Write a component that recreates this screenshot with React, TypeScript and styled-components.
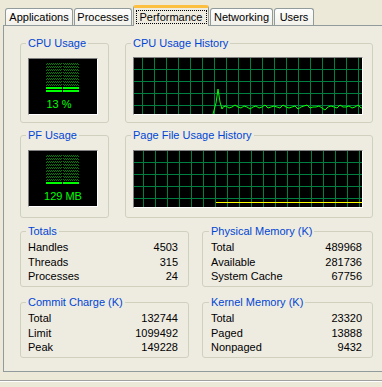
import React from 'react';
import styled, { createGlobalStyle } from 'styled-components';

const GlobalStyle = createGlobalStyle`
  html, body {
    margin: 0;
    padding: 0;
    background: #ece9d8;
  }
  body {
    width: 382px;
    height: 387px;
    overflow: hidden;
    font-family: 'Liberation Sans', Arial, sans-serif;
    font-size: 11px;
    color: #000;
  }
`;

const Window = styled.div`
  width: 382px;
  height: 387px;
  padding-top: 5px;
  box-sizing: border-box;
  overflow: hidden;
  display: flex;
  flex-direction: column;
`;

const TabStrip = styled.div`
  display: flex;
  align-items: flex-end;
  gap: 1px;
  height: 21px;
  padding-left: 5px;
  margin-bottom: -1px;
  position: relative;
  z-index: 1;
`;

const Tab = styled.div<{ $width: number; $active?: boolean }>`
  box-sizing: border-box;
  flex: none;
  width: ${(p) => p.$width}px;
  height: ${(p) => (p.$active ? 21 : 17)}px;
  margin-bottom: ${(p) => (p.$active ? 0 : 1)}px;
  display: flex;
  justify-content: center;
  align-items: flex-start;
  padding-top: 2px;
  line-height: 13px;
  border: 1px solid #919b9c;
  border-bottom: none;
  border-top: ${(p) => (p.$active ? '3px solid #fdbf3f' : '1px solid #919b9c')};
  border-radius: 3px 3px 0 0;
  background: ${(p) => (p.$active ? '#eeebe0' : 'linear-gradient(#fefefe, #f1f0e9)')};
`;

const FocusRing = styled.span`
  box-sizing: border-box;
  width: 71px;
  height: 14px;
  border: 1px dotted #000;
  display: flex;
  justify-content: center;
  align-items: center;
  line-height: 12px;
`;

const Panel = styled.div`
  box-sizing: border-box;
  flex: none;
  margin-left: 3px;
  width: 400px;
  height: 347px;
  border: 1px solid #919b9c;
  background: #eeebe0;
  padding: 11px 0 0 16px;
`;

const Row = styled.div<{ $gap: number; $top?: number }>`
  display: flex;
  gap: ${(p) => p.$gap}px;
  margin-top: ${(p) => p.$top ?? 0}px;
`;

const Group = styled.fieldset<{ $width: number; $height: number; $padLeft?: number }>`
  box-sizing: border-box;
  margin: 0;
  min-width: 0;
  width: ${(p) => p.$width}px;
  height: ${(p) => p.$height}px;
  padding: 0 10px 0 ${(p) => p.$padLeft ?? 7}px;
  border: 1px solid #d0d0bf;
  border-radius: 3px;
`;

const Legend = styled.legend`
  padding: 0 2px;
  margin-left: -2px;
  color: #0046d5;
  line-height: 13px;
`;

const Meter = styled.div`
  box-sizing: border-box;
  margin-top: 8px;
  width: 70px;
  height: 57px;
  background: #000;
  border: 1px solid;
  border-color: #808080 #fff #fff #808080;
  display: flex;
  flex-direction: column;
  align-items: center;

  svg {
    display: block;
  }
`;

const MeterText = styled.div<{ $shift?: number }>`
  margin-top: 3px;
  margin-right: ${(p) => p.$shift ?? 0}px;
  color: #00ff00;
  line-height: 12px;
  white-space: pre;
`;

const Graph = styled.div<{ $top: number }>`
  box-sizing: border-box;
  margin-top: ${(p) => p.$top}px;
  width: 230px;
  height: 58px;
  background: #000;
  border: 1px solid;
  border-color: #808080 #fff #fff #808080;

  svg {
    display: block;
  }
`;

const StatList = styled.div`
  padding-top: 2px;
`;

const StatRow = styled.div`
  display: flex;
  justify-content: space-between;
  line-height: 14.5px;
`;

const StatusBar = styled.div`
  margin-top: 8px;
  flex: 1;
  border-top: 1px solid #a0a0a0;
  box-shadow: inset 0 1px 0 #fff;
`;

// dim segments are a checker of dark green pixels, lit ones solid green
function MeterBars({ rows, lit }: { rows: number; lit: number }) {
  const pixels = [];
  for (let i = 0; i < rows; i++) {
    const y = 4 + i * 3;
    const on = i >= rows - lit;
    for (const x0 of [17, 34]) {
      if (on) {
        pixels.push(<rect key={`${i}-${x0}`} x={x0} y={y} width={16} height={2} fill="#00ff00" />);
        continue;
      }
      for (let dy = 0; dy < 2; dy++) {
        for (let dx = (dy + x0) % 2; dx < 16; dx += 2) {
          pixels.push(
            <rect key={`${i}-${x0}-${dx}-${dy}`} x={x0 + dx} y={y + dy} width={1} height={1} fill="#008000" />,
          );
        }
      }
    }
  }
  return (
    <svg width={68} height={36} shapeRendering="crispEdges">
      {pixels}
    </svg>
  );
}

function GridGraph({ offset, top, children }: { offset: number; top: number; children?: React.ReactNode }) {
  const lines = [];
  for (let x = offset; x < 228; x += 12) {
    lines.push(<line key={`v${x}`} x1={x + 0.5} y1={0} x2={x + 0.5} y2={56} />);
  }
  for (const y of [11, 23, 35, 47]) {
    lines.push(<line key={`h${y}`} x1={0} y1={y + 0.5} x2={228} y2={y + 0.5} />);
  }
  return (
    <Graph $top={top}>
      <svg width={228} height={56}>
        <g stroke="#008040" strokeWidth={1} shapeRendering="crispEdges">
          {lines}
        </g>
        {children}
      </svg>
    </Graph>
  );
}

const cpuNoise = [
  0, -1, 1, 0, -2, 0, 1, -1, 0, 2, 0, -1, 1, 0, -2, 1, 0, -1, 0, 1, -2, 0, 1, 0, -1, 2, 0, -1, -2,
  1, 0, 0, -1, 1, 3, 0, -1, 0, 1, -2, 0, 0, -1, 1, 0, -2, 1, 0,
];

const cpuPoints =
  '79,56 82,45 84,31 86,44 88,51 ' +
  cpuNoise.map((n, i) => `${89 + i * 3},${49 + n}`).join(' ');

const tabs = [
  { label: 'Applications', width: 68 },
  { label: 'Processes', width: 58 },
  { label: 'Performance', width: 76, active: true },
  { label: 'Networking', width: 63 },
  { label: 'Users', width: 40 },
];

const totals = [
  ['Handles', '4503'],
  ['Threads', '315'],
  ['Processes', '24'],
];
const physical = [
  ['Total', '489968'],
  ['Available', '281736'],
  ['System Cache', '67756'],
];
const commit = [
  ['Total', '132744'],
  ['Limit', '1099492'],
  ['Peak', '149228'],
];
const kernel = [
  ['Total', '23320'],
  ['Paged', '13888'],
  ['Nonpaged', '9432'],
];

function Stats({ rows }: { rows: string[][] }) {
  return (
    <StatList>
      {rows.map(([label, value]) => (
        <StatRow key={label}>
          <span>{label}</span>
          <span>{value}</span>
        </StatRow>
      ))}
    </StatList>
  );
}

export default function App() {
  return (
    <>
      <GlobalStyle />
      <Window>
        <TabStrip>
          {tabs.map((t) => (
            <Tab key={t.label} $width={t.width} $active={t.active}>
              {t.active ? <FocusRing>{t.label}</FocusRing> : t.label}
            </Tab>
          ))}
        </TabStrip>
        <Panel>
          <Row $gap={16}>
            <Group $width={89} $height={86}>
              <Legend>CPU Usage</Legend>
              <Meter>
                <MeterBars rows={10} lit={2} />
                <MeterText $shift={8}>13 %</MeterText>
              </Meter>
            </Group>
            <Group $width={248} $height={86}>
              <Legend>CPU Usage History</Legend>
              <GridGraph offset={8} top={7}>
                <polyline points={cpuPoints} fill="none" stroke="#00ff00" strokeWidth={1} />
              </GridGraph>
            </Group>
          </Row>
          <Row $gap={16} $top={6}>
            <Group $width={89} $height={89}>
              <Legend>PF Usage</Legend>
              <Meter>
                <MeterBars rows={10} lit={1} />
                <MeterText>129 MB</MeterText>
              </Meter>
            </Group>
            <Group $width={248} $height={89}>
              <Legend>Page File Usage History</Legend>
              <GridGraph offset={9} top={8}>
                <line x1={82} y1={51.5} x2={228} y2={51.5} stroke="#ffff00" strokeWidth={1} />
              </GridGraph>
            </Group>
          </Row>
          <Row $gap={13} $top={7}>
            <Group $width={169} $height={62}>
              <Legend>Totals</Legend>
              <Stats rows={totals} />
            </Group>
            <Group $width={171} $height={62} $padLeft={8}>
              <Legend>Physical Memory (K)</Legend>
              <Stats rows={physical} />
            </Group>
          </Row>
          <Row $gap={13} $top={9}>
            <Group $width={169} $height={62}>
              <Legend>Commit Charge (K)</Legend>
              <Stats rows={commit} />
            </Group>
            <Group $width={171} $height={62} $padLeft={8}>
              <Legend>Kernel Memory (K)</Legend>
              <Stats rows={kernel} />
            </Group>
          </Row>
        </Panel>
        <StatusBar />
      </Window>
    </>
  );
}
